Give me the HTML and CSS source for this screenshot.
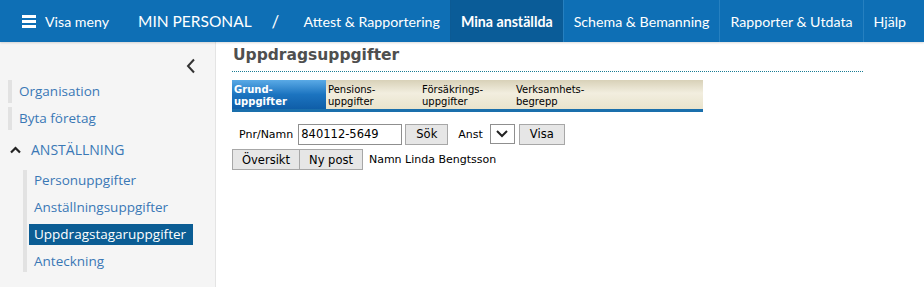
FILE: index.html
```html
<!DOCTYPE html>
<html lang="sv">
<head>
<meta charset="utf-8">
<title>Uppdragsuppgifter</title>
<link rel="stylesheet" href="styles.css">
</head>
<body>
<header class="topbar">
  <a class="menu-toggle" href="#"><svg class="burger" width="14" height="13" viewBox="0 0 14 13"><rect y="0" width="14" height="3" fill="#fff"/><rect y="5" width="14" height="3" fill="#fff"/><rect y="10" width="14" height="3" fill="#fff"/></svg>Visa meny</a>
  <span class="brand">MIN PERSONAL</span>
  <span class="slash">/</span>
  <nav class="mainnav">
    <a class="nav-item" href="#">Attest &amp; Rapportering</a>
    <a class="nav-item active" href="#">Mina anställda</a>
    <a class="nav-item" href="#">Schema &amp; Bemanning</a>
    <a class="nav-item" href="#">Rapporter &amp; Utdata</a>
    <a class="nav-item" href="#">Hjälp</a>
  </nav>
</header>
<div class="layout">
  <aside class="sidebar">
    <div class="collapse-row"><svg width="10" height="16" viewBox="0 0 10 16"><path d="M8 1.5 L2 8 L8 14.5" fill="none" stroke="#333" stroke-width="2"/></svg></div>
    <a class="side-item" href="#">Organisation</a>
    <a class="side-item" href="#">Byta företag</a>
    <div class="side-group"><svg class="caret" width="11" height="8" viewBox="0 0 11 8"><path d="M1 6.5 L5.5 2 L10 6.5" fill="none" stroke="#222" stroke-width="2.2"/></svg>ANSTÄLLNING</div>
    <div class="sub-list">
      <a class="sub-item" href="#">Personuppgifter</a>
      <a class="sub-item" href="#">Anställningsuppgifter</a>
      <a class="sub-item current" href="#">Uppdragstagaruppgifter</a>
      <a class="sub-item" href="#">Anteckning</a>
    </div>
  </aside>
  <main class="content">
    <h1 class="page-title">Uppdragsuppgifter</h1>
    <div class="tabs">
      <div class="tab active">Grund-<br>uppgifter</div>
      <div class="tab">Pensions-<br>uppgifter</div>
      <div class="tab">Försäkrings-<br>uppgifter</div>
      <div class="tab">Verksamhets-<br>begrepp</div>
    </div>
    <div class="form-row">
      <label class="lbl">Pnr/Namn</label>
      <input class="txt" type="text" value="840112-5649">
      <button class="btn">Sök</button>
      <label class="lbl anst">Anst</label>
      <span class="sel"><svg width="12" height="8" viewBox="0 0 12 8"><path d="M1 1 L6 6 L11 1" fill="none" stroke="#222" stroke-width="2"/></svg></span>
      <button class="btn">Visa</button>
    </div>
    <div class="form-row row2">
      <button class="btn wide">Översikt</button><button class="btn wide">Ny post</button>
      <span class="name">Namn Linda Bengtsson</span>
    </div>
  </main>
</div>
</body>
</html>
```
FILE: styles.css
```css
* { box-sizing: border-box; }
html, body { margin: 0; padding: 0; background: #fff; }
body { width: 924px; height: 287px; overflow: hidden; font-family: "Open Sans", "Noto Sans", sans-serif; }
a { text-decoration: none; }

.topbar {
  height: 42px;
  background: #0e6fb5;
  display: flex;
  align-items: stretch;
  color: #fff;
  font-family: Lato, "Open Sans", sans-serif;
  font-size: 14.2px;
  white-space: nowrap;
  box-shadow: 0 1px 2px rgba(0,0,0,0.15);
  position: relative;
}
.menu-toggle {
  display: flex; align-items: center;
  color: #fff;
  padding-left: 22px;
  width: 138px;
}
.burger { margin-right: 9px; }
.brand { display: flex; align-items: center; font-size: 15.5px; }
.slash { display: flex; align-items: center; font-size: 17px; margin: 0 0 0 20px; }
.mainnav { display: flex; align-items: stretch; margin-left: auto; }
.nav-item {
  display: flex; align-items: center;
  color: #fff;
  padding: 0 10px;
  border-left: 1px solid #2680c0;
}
.nav-item:first-child { border-left: none; }
.nav-item.active { background: #0a5c98; font-weight: bold; border-left: 1px solid #0b5a94; }
.nav-item:last-child { padding-right: 18px; }

.layout { display: flex; height: 245px; }
.sidebar {
  width: 216px;
  background: #f5f5f5;
  border-right: 1px solid #e4e4e4;
  padding: 16px 0 0 8px;
  font-size: 13.5px;
}
.collapse-row { display: flex; justify-content: flex-end; padding-right: 19px; height: 21px; }
.side-item {
  display: block;
  color: #3a78b5;
  border-left: 4px solid #e2e2e2;
  padding: 1px 0 1px 7px;
  margin-bottom: 4px;
  line-height: 21px;
}
.collapse-row + .side-item { margin-top: 1px; }
.side-group {
  display: flex; align-items: center;
  color: #3a78b5;
  margin: 10px 0 10px 2px;
  line-height: 20px;
  font-size: 14px;
}
.caret { margin-right: 10px; }
.sub-list { margin-left: 15px; border-left: 4px solid #e2e2e2; width: 170px; }
.sub-item {
  display: block;
  color: #3a78b5;
  line-height: 21px;
  padding-left: 5px;
  margin-bottom: 6px;
  margin-left: 2px;
}
.sub-item.current { background: #0b5d94; color: #fff; }

.content {
  flex: 1;
  padding: 3px 0 0 16px;
  font-family: "DejaVu Sans", Verdana, sans-serif;
  font-size: 11px;
  color: #000;
}
.page-title {
  margin: 0;
  font-size: 15.5px;
  font-weight: bold;
  color: #4f4f4f;
  width: 631px;
  padding: 0 0 6px 1px;
  border-bottom: 1px dotted #1a7d94;
  line-height: 20px;
}
.tabs {
  display: flex;
  width: 471px;
  margin-top: 8px;
  background: linear-gradient(#d8d1b8, #f2eedf 45%, #e9e3cc);
  border-bottom: 3px solid #1a6fac;
  height: 32px;
  font-size: 10px;
  line-height: 12px;
}
.tab { padding: 4px 0 0 2px; width: 94px; color: #000; }
.tab.active {
  background: linear-gradient(#5aaae6, #1c74c0 50%, #0f5ea8);
  color: #fff;
  font-weight: bold;
  padding-left: 2px;
}
.form-row { display: flex; align-items: center; margin-top: 12px; height: 20px; }
.lbl { margin-left: 7px; margin-right: 5px; }
.lbl.anst { margin-left: 10px; margin-right: 7px; }
.txt {
  width: 104px; height: 21px;
  border: 1px solid #8f8f8f;
  font: 11.5px "DejaVu Sans", Verdana, sans-serif;
  padding: 0 2px;
  margin-right: 3px;
}
.btn {
  height: 21px;
  padding: 0 10px;
  background: #e6e6e6;
  border: 1px solid #a7a7a7;
  font: 11.5px "DejaVu Sans", Verdana, sans-serif;
  color: #000;
}
.sel {
  width: 25px; height: 20px;
  border: 1px solid #8f8f8f;
  display: inline-flex; align-items: center; justify-content: center;
  margin-right: 4px;
  background: #fff;
}
.row2 { margin-top: 5px; height: 21px; }
.btn.wide { padding: 0 9px; }
.btn.wide + .btn.wide { border-left: none; margin-left: 0; }
.name { margin-left: 6px; }
```
